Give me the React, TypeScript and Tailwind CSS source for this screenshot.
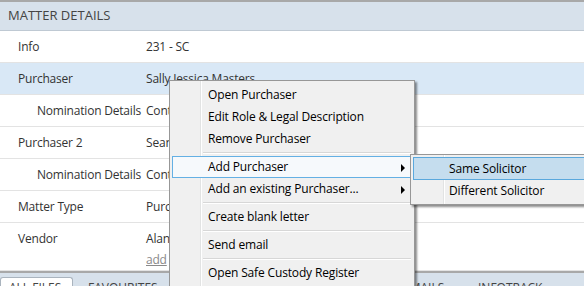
import React from "react";

const font = { fontFamily: '"Open Sans", "Noto Sans", sans-serif' };

function Row({
  label,
  value,
  indent,
  highlight,
  extra,
}: {
  label: string;
  value: string;
  indent?: boolean;
  highlight?: boolean;
  extra?: React.ReactNode;
}) {
  return (
    <div
      className={`flex whitespace-nowrap border-b border-[#e3e3e3] text-[12px] tracking-[-0.2px] text-[#333] ${
        highlight ? "bg-[#d9e8f6]" : "bg-white"
      }`}
    >
      <div className={`w-[146px] shrink-0 pt-[7px] ${indent ? "pl-[37px]" : "pl-[18px]"}`}>
        {label}
      </div>
      <div className="flex flex-col pt-[7px]">
        <span className="h-[21px]">{value}</span>
        {extra}
      </div>
      <div className={extra ? "h-[47px]" : "h-[31px]"} />
    </div>
  );
}

function MenuItem({
  label,
  active,
  arrow,
}: {
  label: string;
  active?: boolean;
  arrow?: boolean;
}) {
  return (
    <div
      className={`relative flex h-[22px] items-center border whitespace-nowrap ${
        active ? "border-[#64b0e4] bg-[#f6f9fc]" : "border-transparent"
      }`}
    >
      <span className="pl-[35px]">{label}</span>
      {arrow && (
        <span className="absolute right-[6px] top-[7px] h-0 w-0 border-y-[4px] border-l-[4px] border-y-transparent border-l-black" />
      )}
    </div>
  );
}

function Sep() {
  return (
    <div className="flex h-[6px] items-center pl-[31px] pr-[1px]">
      <div className="h-[2px] w-full border-t border-b border-t-[#d7d7d7] border-b-white" />
    </div>
  );
}

export default function App() {
  return (
    <div className="relative h-[286px] w-[584px] overflow-hidden bg-white" style={font}>
      <div className="h-[2px] bg-[#a8a8a8]" />
      <div className="flex h-[29px] items-center border-b border-[#bfc9d3] bg-[#d7e1eb] pl-[8px] text-[13px] text-[#444]">
        MATTER DETAILS
      </div>
      <Row label="Info" value="231 - SC" />
      <Row label="Purchaser" value="Sally Jessica Masters" highlight />
      <Row label="Nomination Details" value="Contract" indent />
      <Row label="Purchaser 2" value="Sean Masters" />
      <Row label="Nomination Details" value="Contract" indent />
      <Row label="Matter Type" value="Purchase" />
      <Row
        label="Vendor"
        value="Alan Smith"
        extra={<span className="text-[#8a8a8a] underline">add</span>}
      />
      <div className="h-[2px] bg-[#a8a8a8]" />
      <div className="flex h-[24px] items-start bg-[#d7e1eb] pt-[4px] text-[12px] text-[#444] whitespace-nowrap">
        <div className="h-[20px] w-[73px] rounded-t-[3px] border border-b-0 border-[#aab4be] bg-white pl-[8px] pt-[2px] leading-[16px]">
          ALL FILES
        </div>
        <div className="h-[20px] w-[330px] pl-[15px] pt-[3px] leading-[16px]">FAVOURITES</div>
        <div className="h-[20px] w-[75px] pt-[3px] leading-[16px]">EMAILS</div>
        <div className="h-[20px] pt-[3px] leading-[16px]">INFOTRACK</div>
      </div>

      {/* Context menu */}
      <div className="absolute left-[169px] top-[80px] w-[246px] border border-[#979797] bg-[#f0f0f0] px-[2px] pt-[3px] pb-[2px] text-[12px] tracking-[-0.15px] text-black shadow-[2px_2px_2px_rgba(0,0,0,0.45)]">
        <div className="absolute bottom-0 left-[30px] top-0 w-[2px] border-l border-r border-l-[#e2e3e3] border-r-white" />
        <div className="relative">
          <MenuItem label="Open Purchaser" />
          <MenuItem label="Edit Role & Legal Description" />
          <MenuItem label="Remove Purchaser" />
          <Sep />
          <MenuItem label="Add Purchaser" active arrow />
          <MenuItem label="Add an existing Purchaser..." arrow />
          <Sep />
          <MenuItem label="Create blank letter" />
          <Sep />
          <MenuItem label="Send email" />
          <Sep />
          <MenuItem label="Open Safe Custody Register" />
          <MenuItem label="Close" />
        </div>
      </div>

      {/* Submenu */}
      <div className="absolute left-[410px] top-[154px] w-[200px] border border-[#979797] bg-[#f0f0f0] p-[2px] text-[12px] tracking-[-0.15px] text-black shadow-[2px_2px_2px_rgba(0,0,0,0.45)]">
        <div className="absolute bottom-0 left-[32px] top-0 w-[2px] border-l border-r border-l-[#e2e3e3] border-r-white" />
        <div className="relative">
          <div className="flex h-[23px] items-center border border-[#5aa8dd] bg-[#c5ddee] pl-[35px]">
            Same Solicitor
          </div>
          <div className="flex h-[22px] items-center border border-transparent pl-[35px]">
            Different Solicitor
          </div>
        </div>
      </div>
    </div>
  );
}
